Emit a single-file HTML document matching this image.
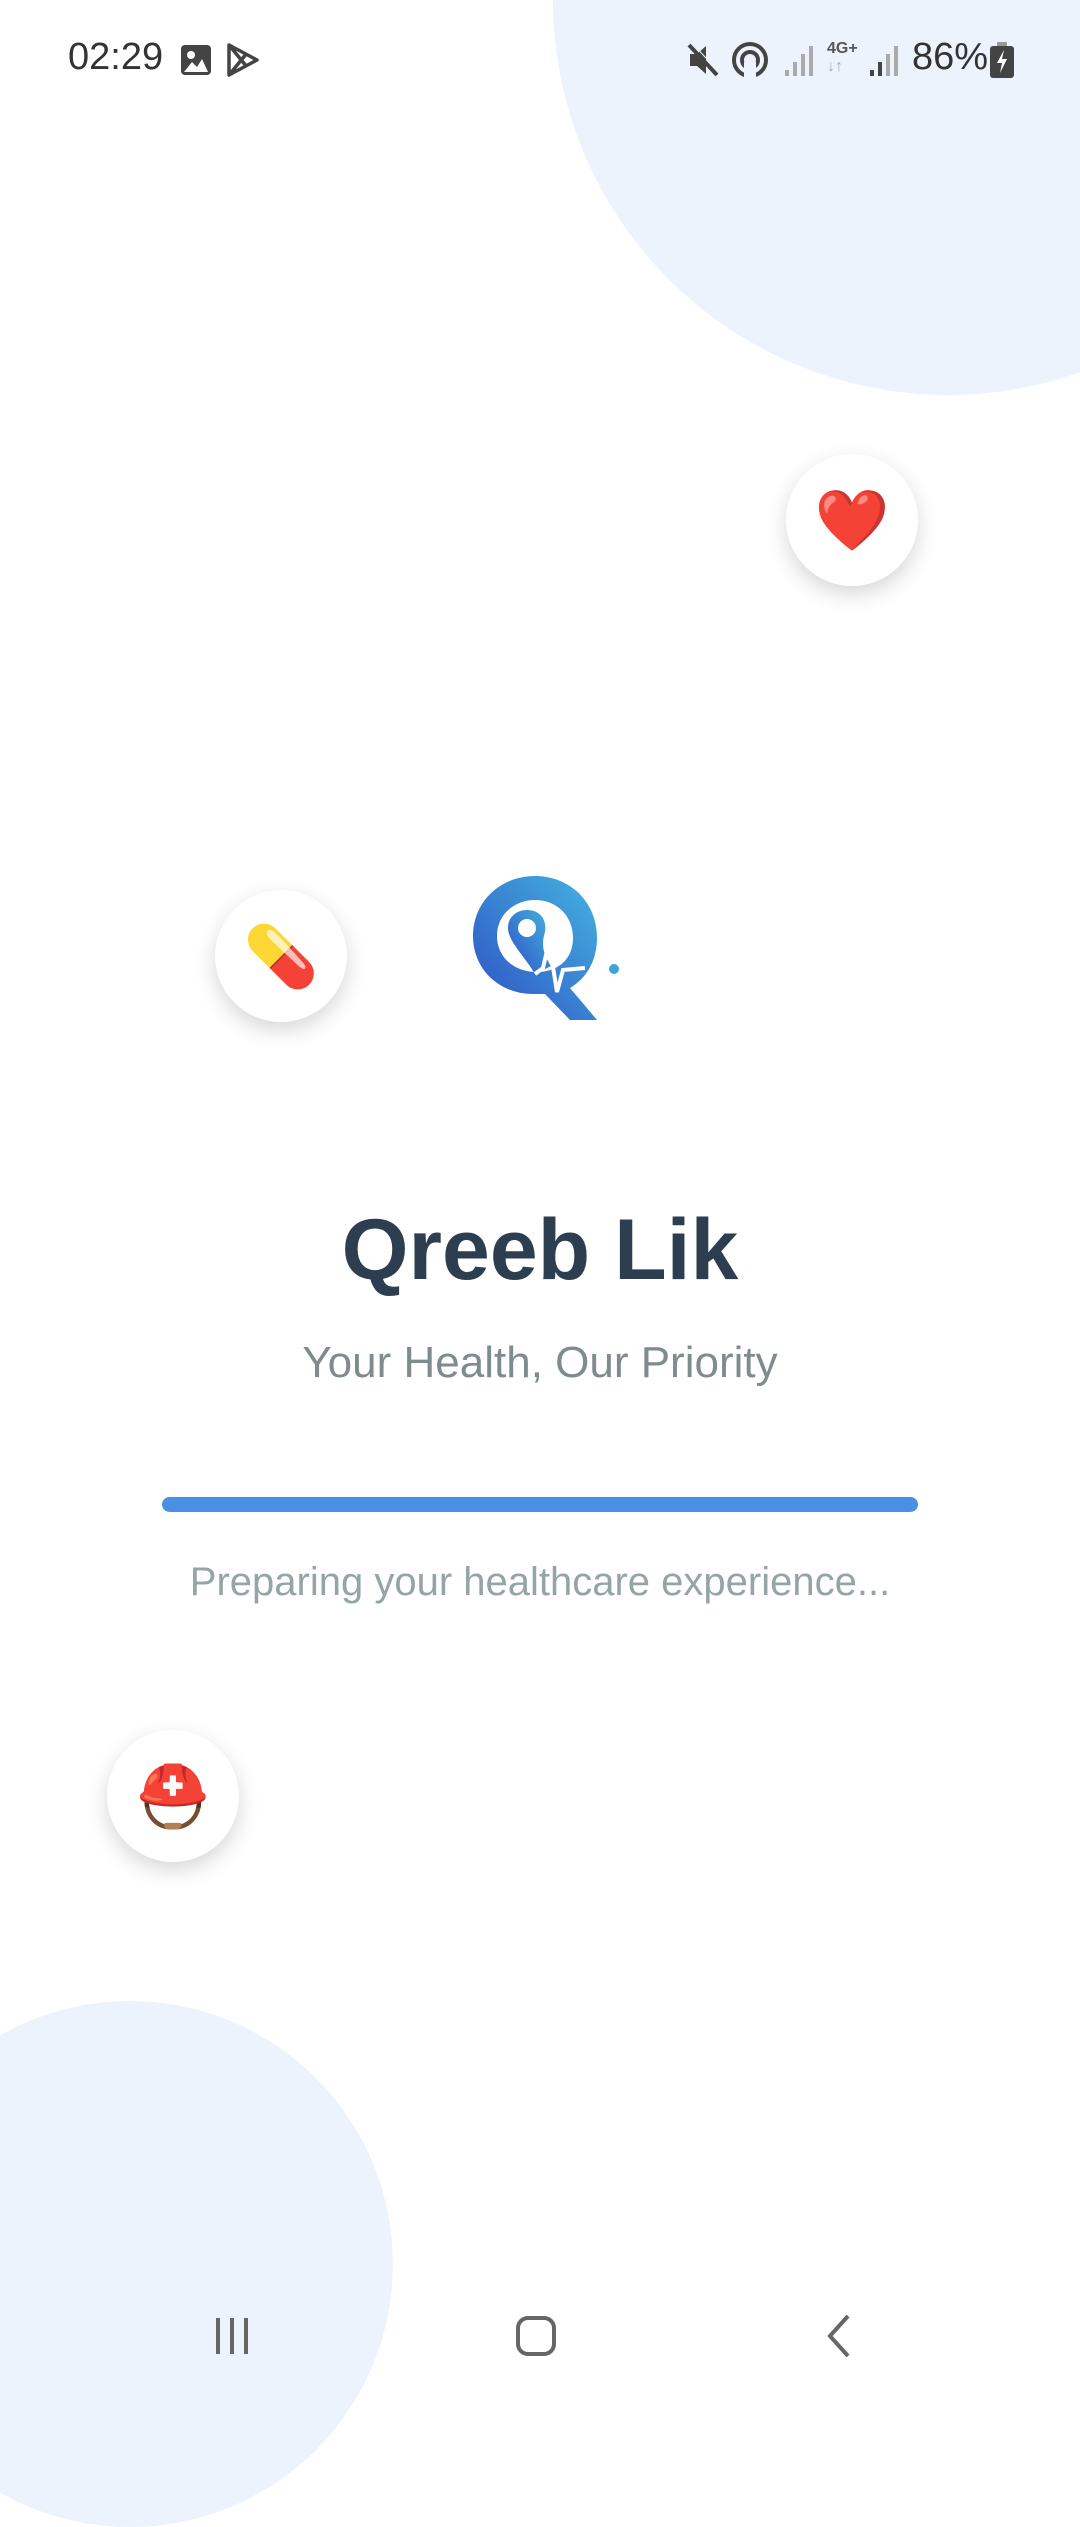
<!DOCTYPE html>
<html><head><meta charset="utf-8"><style>
*{margin:0;padding:0;box-sizing:border-box}
body{width:1080px;height:2400px;background:#fff;position:relative;overflow:hidden;font-family:"Liberation Sans",Roboto,sans-serif}
.c{position:absolute;border-radius:50%;background:#ecf3fc}
.b{position:absolute;width:132px;height:132px;border-radius:50%;background:#fff;box-shadow:0 8px 22px rgba(0,0,0,.16);display:flex;align-items:center;justify-content:center;font-size:60px;font-family:"Noto Color Emoji","DejaVu Sans",sans-serif}
.t{position:absolute;left:0;width:1080px;text-align:center}
</style></head><body>
<div class="c" style="left:553px;top:-395px;width:790px;height:790px"></div>
<div class="c" style="left:-133px;top:2001px;width:526px;height:526px"></div>

<div style="position:absolute;left:68px;top:36px;font-size:38px;color:#333">02:29</div>
<svg style="position:absolute;left:180px;top:44px" width="32" height="32" viewBox="0 0 32 32"><rect x="1" y="1" width="30" height="30" rx="4" fill="#444"/><circle cx="11" cy="11" r="4" fill="#fff"/><path d="M4 28 L12 18 L17 23 L22 15 L28 28Z" fill="#fff"/></svg>
<svg style="position:absolute;left:225px;top:42px" width="36" height="36" viewBox="0 0 36 36"><path d="M4 3 L32 18 L4 33 Z M4 3 L22 25 M4 33 L22 11" fill="none" stroke="#444" stroke-width="3.5" stroke-linejoin="round"/></svg>
<svg style="position:absolute;left:686px;top:42px" width="34" height="36" viewBox="0 0 34 36"><path d="M4 12 H11 L20 4 V32 L11 24 H4Z" fill="#444"/><path d="M3 3 L31 33" stroke="#444" stroke-width="4"/><path d="M3 3 L31 33" stroke="#ecf3fc" stroke-width="1" transform="translate(3,-2)"/></svg>
<svg style="position:absolute;left:730px;top:40px" width="40" height="40" viewBox="0 0 40 40"><circle cx="20" cy="20" r="16" fill="none" stroke="#444" stroke-width="4"/><circle cx="20" cy="20" r="8" fill="none" stroke="#444" stroke-width="4"/><rect x="14" y="22" width="12" height="18" fill="#ecf3fc"/></svg>
<svg style="position:absolute;left:785px;top:44px" width="30" height="32"><rect x="0" y="26" width="4" height="6" fill="#aaa"/><rect x="8" y="18" width="4" height="14" fill="#aaa"/><rect x="16" y="10" width="4" height="22" fill="#aaa"/><rect x="24" y="2" width="4" height="30" fill="#aaa"/></svg>
<div style="position:absolute;left:827px;top:40px;font-size:16px;font-weight:bold;color:#555">4G+<br><span style="color:#aaa">↓↑</span></div>
<svg style="position:absolute;left:870px;top:44px" width="30" height="32"><rect x="0" y="26" width="4" height="6" fill="#444"/><rect x="8" y="18" width="4" height="14" fill="#444"/><rect x="16" y="10" width="4" height="22" fill="#aaa"/><rect x="24" y="2" width="4" height="30" fill="#aaa"/></svg>
<div style="position:absolute;left:912px;top:36px;font-size:38px;color:#333">86%</div>
<svg style="position:absolute;left:990px;top:42px" width="24" height="36"><rect x="7" y="0" width="10" height="5" fill="#999"/><rect x="0" y="4" width="24" height="32" rx="3" fill="#444"/><path d="M14 8 L7 21 H12 L10 31 L17 17 H12Z" fill="#fff"/></svg>

<div class="b" style="left:786px;top:454px;color:#e02030">❤️</div>
<div class="b" style="left:215px;top:890px">💊</div>
<div class="b" style="left:107px;top:1730px">⛑️</div>

<svg style="position:absolute;left:465px;top:870px" width="160" height="150" viewBox="0 0 160 150">
<defs><linearGradient id="g" x1="0" y1="1" x2="1" y2="0"><stop offset="0" stop-color="#2d4fc4"/><stop offset="1" stop-color="#45b4e0"/></linearGradient></defs>
<path d="M70 6 C35 6 8 32 8 66 C8 100 35 124 68 124 L80 124 L105 150 L132 150 L105 118 C122 108 132 90 132 68 C132 32 105 6 70 6 Z M70 30 C92 30 108 46 108 68 C108 90 92 102 72 102 C50 102 32 88 32 66 C32 44 50 30 70 30Z" fill="url(#g)"/>
<path d="M62 40 C48 40 40 52 44 64 C48 76 62 90 70 104 L86 96 C78 84 76 74 80 62 C82 48 74 40 62 40Z" fill="url(#g)"/>
<circle cx="62" cy="58" r="9" fill="#fff"/>
<path d="M70 104 L78 98 L84 72 L92 122 L98 100 L120 98" fill="none" stroke="#fff" stroke-width="4"/>
<circle cx="149" cy="99" r="5" fill="#3aa6dc"/>
</svg>

<div class="t" style="top:1201px;font-size:86px;font-weight:bold;color:#2c3e50">Qreeb Lik</div>
<div class="t" style="top:1338px;font-size:44px;color:#7f8c8d">Your Health, Our Priority</div>
<div style="position:absolute;left:162px;top:1497px;width:756px;height:15px;border-radius:8px;background:#4a90e2"></div>
<div class="t" style="top:1560px;font-size:40px;color:#95a5a6">Preparing your healthcare experience...</div>

<svg style="position:absolute;left:210px;top:2316px" width="44" height="40"><rect x="6" y="2" width="4" height="36" fill="#666"/><rect x="20" y="2" width="4" height="36" fill="#666"/><rect x="34" y="2" width="4" height="36" fill="#666"/></svg>
<svg style="position:absolute;left:514px;top:2314px" width="44" height="44"><rect x="4" y="4" width="36" height="36" rx="10" fill="none" stroke="#666" stroke-width="4"/></svg>
<svg style="position:absolute;left:824px;top:2314px" width="30" height="44"><path d="M24 2 L6 22 L24 42" fill="none" stroke="#666" stroke-width="4"/></svg>
</body></html>
